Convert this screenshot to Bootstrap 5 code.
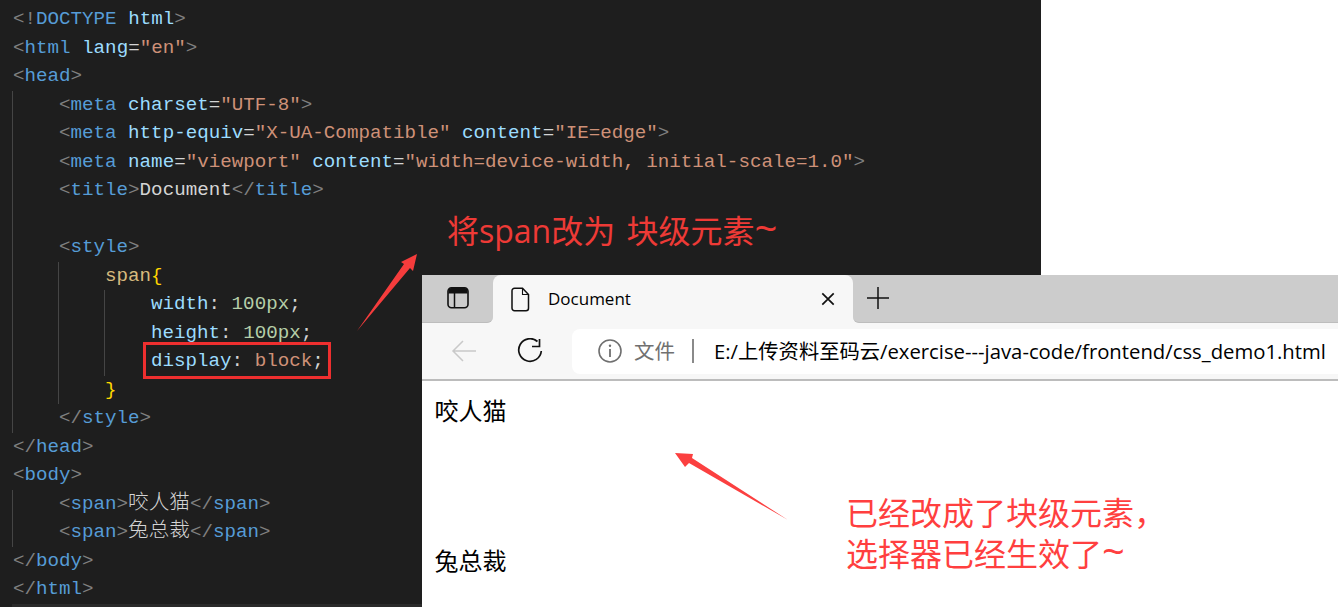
<!DOCTYPE html>
<html lang="zh">
<head>
<meta charset="utf-8">
<title>Document</title>
<link href="https://cdn.jsdelivr.net/npm/bootstrap@5.3.0/dist/css/bootstrap.min.css" rel="stylesheet">
<style>
html,body{margin:0;padding:0;background:#fff;overflow:hidden}
.stage{width:1338px;height:607px;position:relative;overflow:hidden;background:#fff}
.editor{width:1041px;height:607px;background:#1e1e1e;padding:5px 0 0 13px;font-family:"Liberation Mono","Noto Sans CJK SC",monospace;font-size:19.2px;line-height:28.5px;color:#d4d4d4;white-space:pre;overflow:hidden}
.cline{height:28.5px}
.guide{border-left:1px solid #454545;padding-left:46px;margin-left:-1px}
.editor-foot{height:4px;background:#2a2a2a;margin-left:-1px}
.b{color:#808080}.t{color:#569cd6}.a{color:#9cdcfe}.s{color:#ce9178}.x{color:#d4d4d4}.sel{color:#d7ba7d}.br{color:#ffd700}.n{color:#b5cea8}
.cjk{font-family:"Noto Sans CJK SC",sans-serif;font-size:20.6px;line-height:0;font-weight:300}
.hilite{display:inline-block;position:relative;border:3px solid #ee2f2f;background:#1e1e1e;width:188px;height:37px;padding:0 5px;margin:-5px 0 0 -8px;line-height:33px;vertical-align:top}
.browser{position:absolute;left:422px;top:275px;width:916px;height:332px;background:#fff;font-family:"Open Sans","Noto Sans CJK SC",sans-serif;color:#000}
.tabstrip{height:48px;background:linear-gradient(#ccc 0,#ccc 50%,#f7f7f7 50%)}
.strip-left{width:71px;height:47.5px;background:#ccc;border-bottom:1px solid #bdbdbd;border-bottom-right-radius:6px}
.strip-right{height:47.5px;background:#ccc;border-bottom:1px solid #bdbdbd;border-bottom-left-radius:6px;padding-left:14px}
.wintab{width:360px;height:48px;background:#f7f7f7;border-radius:8px 8px 0 0;padding:0 18px 0 18px;font-size:17px}
.tab-title{margin-left:18px}
.toolbar{height:58px;background:#f7f7f7;border-bottom:2px solid #bcbcbc;position:relative;padding:6px 0 6px 29px}
.tool-back{margin-right:40px}
.tool-reload{margin-right:29px}
.addr{height:45px;background:#fff;border-radius:8px 0 0 8px;white-space:nowrap;padding-left:26px;font-size:20.3px;overflow:hidden}
.addr-info{color:#707070;font-size:20.5px;margin-left:12px}
.addr-sep{width:2px;height:24px;background:#8a8a8a;margin:0 20px 0 17px}
.pagebody{font-family:"Noto Sans CJK SC",sans-serif;font-size:24px;line-height:30px;padding:14px 13px 0 12.500px}
.blockspan{display:block;height:150px}
.note{position:absolute;color:#ff3f3f;font-family:"Noto Sans CJK SC",sans-serif;font-size:32px;white-space:nowrap;line-height:40.500px}
.note-a{left:447px;top:211px;color:#ee3a36;font-family:"Open Sans","Noto Sans CJK SC",sans-serif;word-spacing:3px}
.note-b{left:846px;top:491px}
.tilde{font-size:40px;line-height:0;font-family:"Open Sans",sans-serif}
.arrows{position:absolute;left:0;top:0;pointer-events:none}
</style>
</head>
<body>
<div class="stage">
  <div class="editor"><div class="cline"><span class="b">&lt;!</span><span class="t">DOCTYPE</span> <span class="a">html</span><span class="b">&gt;</span></div><div class="cline"><span class="b">&lt;</span><span class="t">html</span> <span class="a">lang</span>=<span class="s">"en"</span><span class="b">&gt;</span></div><div class="cline"><span class="b">&lt;</span><span class="t">head</span><span class="b">&gt;</span></div><div class="guide"><div class="cline"><span class="b">&lt;</span><span class="t">meta</span> <span class="a">charset</span>=<span class="s">"UTF-8"</span><span class="b">&gt;</span></div><div class="cline"><span class="b">&lt;</span><span class="t">meta</span> <span class="a">http-equiv</span>=<span class="s">"X-UA-Compatible"</span> <span class="a">content</span>=<span class="s">"IE=edge"</span><span class="b">&gt;</span></div><div class="cline"><span class="b">&lt;</span><span class="t">meta</span> <span class="a">name</span>=<span class="s">"viewport"</span> <span class="a">content</span>=<span class="s">"width=device-width, initial-scale=1.0"</span><span class="b">&gt;</span></div><div class="cline"><span class="b">&lt;</span><span class="t">title</span><span class="b">&gt;</span>Document<span class="b">&lt;/</span><span class="t">title</span><span class="b">&gt;</span></div><div class="cline"></div><div class="cline"><span class="b">&lt;</span><span class="t">style</span><span class="b">&gt;</span></div><div class="guide"><div class="cline"><span class="sel">span</span><span class="br">{</span></div><div class="guide"><div class="cline"><span class="a">width</span>: <span class="n">100px</span>;</div><div class="cline"><span class="a">height</span>: <span class="n">100px</span>;</div><div class="cline"><span class="hilite"><span class="a">display</span>: <span class="s">block</span>;</span></div></div><div class="cline"><span class="br">}</span></div></div><div class="cline"><span class="b">&lt;/</span><span class="t">style</span><span class="b">&gt;</span></div></div><div class="cline"><span class="b">&lt;/</span><span class="t">head</span><span class="b">&gt;</span></div><div class="cline"><span class="b">&lt;</span><span class="t">body</span><span class="b">&gt;</span></div><div class="guide"><div class="cline"><span class="b">&lt;</span><span class="t">span</span><span class="b">&gt;</span><span class="cjk">咬人猫</span><span class="b">&lt;/</span><span class="t">span</span><span class="b">&gt;</span></div><div class="cline"><span class="b">&lt;</span><span class="t">span</span><span class="b">&gt;</span><span class="cjk">兔总裁</span><span class="b">&lt;/</span><span class="t">span</span><span class="b">&gt;</span></div></div><div class="cline"><span class="b">&lt;/</span><span class="t">body</span><span class="b">&gt;</span></div><div class="cline"><span class="b">&lt;/</span><span class="t">html</span><span class="b">&gt;</span></div><div class="editor-foot"></div></div>

  <div class="browser">
    <div class="tabstrip d-flex">
      <div class="strip-left d-flex align-items-center justify-content-center">
        <svg width="28" height="28" viewBox="0 0 28 28" fill="none"><rect x="4" y="3.800" width="20" height="20" rx="3.500" stroke="#111" stroke-width="1.600"/><path d="M4.500 8.500V7a3 3 0 0 1 3-3h13a3 3 0 0 1 3 3v2.500h-19.500z" fill="#111"/><path d="M10.500 9v15" stroke="#111" stroke-width="1.500"/></svg>
      </div>
      <div class="wintab d-flex align-items-center">
        <svg width="19" height="25" viewBox="0 0 19 25" fill="none" class="flex-shrink-0"><path d="M3.500 1.200h8l6 6.300v13.800a2.500 2.500 0 0 1-2.500 2.500H3.500A2.500 2.500 0 0 1 1 21.300V3.700a2.500 2.500 0 0 1 2.500-2.500z" stroke="#111" stroke-width="1.500"/><path d="M11.500 1.500v6h6" stroke="#111" stroke-width="1.100"/></svg>
        <span class="tab-title flex-grow-1">Document</span>
        <svg width="14" height="14" viewBox="0 0 14 14"><path d="M1.300 1.300l11.400 11.400M12.700 1.300L1.300 12.700" stroke="#111" stroke-width="1.700"/></svg>
      </div>
      <div class="strip-right flex-grow-1 d-flex align-items-center">
        <svg width="22" height="22" viewBox="0 0 22 22"><path d="M11 0v22M0 11h22" stroke="#111" stroke-width="1.500"/></svg>
      </div>
    </div>
    <div class="toolbar d-flex align-items-center">
      <svg class="tool-back flex-shrink-0" width="26" height="24" viewBox="0 0 26 24" fill="none"><path d="M25 12H2M12 2L2 12l10 10" stroke="#c9c9c9" stroke-width="1.500"/></svg>
      <svg class="tool-reload flex-shrink-0" width="26" height="26" viewBox="0 0 26 26" fill="none"><path d="M20.500 3.500a11.300 11.300 0 1 0 3.800 9.500" stroke="#111" stroke-width="1.700"/><path d="M15 8.500h7.500V1" stroke="#111" stroke-width="1.700"/></svg>
      <div class="addr flex-grow-1 d-flex align-items-center">
        <svg width="24" height="24" viewBox="0 0 24 24" fill="none" class="flex-shrink-0"><circle cx="12" cy="12" r="11" stroke="#6f6f6f" stroke-width="1.600"/><path d="M12 10v8" stroke="#6f6f6f" stroke-width="1.800"/><circle cx="12" cy="6.800" r="1.200" fill="#6f6f6f"/></svg>
        <span class="addr-info">文件</span>
        <span class="addr-sep d-inline-block flex-shrink-0"></span>
        <span>E:/上传资料至码云/exercise---java-code/frontend/css_demo1.html</span>
      </div>
    </div>
    <div class="pagebody">
      <span class="blockspan">咬人猫</span>
      <span class="blockspan">兔总裁</span>
    </div>
  </div>

  <svg class="arrows" width="1338" height="607" viewBox="0 0 1338 607">
    <polygon points="357,331 404,264 401,262 417,254 413,271 410,268" fill="#f53c3c"/>
    <polygon points="788,520 689,463 685,467 675,453 693,454 692,458" fill="#fb4040"/>
  </svg>
  <div class="note note-a">将span改为 块级元素<span class="tilde">~</span></div>
  <div class="note note-b">已经改成了块级元素，<br>选择器已经生效了<span class="tilde">~</span></div>
</div>
</body>
</html>
